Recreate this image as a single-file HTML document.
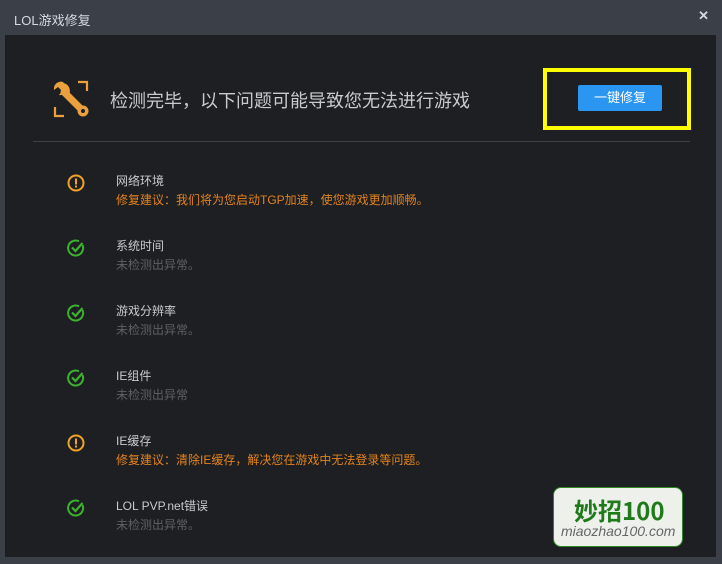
<!DOCTYPE html><html><head><meta charset="utf-8"><style>
body{margin:0;width:722px;height:564px;background:#3a3f48;font-family:"Liberation Sans","Noto Sans CJK SC",sans-serif;position:relative;overflow:hidden}
.title{position:absolute;left:14px;top:10px;color:#d6d9de;font-size:13px}
.x{position:absolute;right:13px;top:8px;color:#d6d9de;font-size:13px;font-weight:bold}
.main{position:absolute;left:5px;top:35px;width:711px;height:522px;background:#1e1f22}
.h{position:absolute;left:110px;top:87px;color:#c8cacd;font-size:18px}
.hl{position:absolute;left:33px;top:141px;width:657px;height:1px;background:#3d4048}
.yb{position:absolute;left:543px;top:68px;width:140px;height:54px;border:4px solid #ffff00}
.btn{position:absolute;left:578px;top:85px;width:84px;height:26px;background:#2a96f2;color:#fff;font-size:13px;text-align:center;line-height:26px;border-radius:2px}
.row{position:absolute;left:0}
.t{position:absolute;left:116px;color:#c8cacd;font-size:12px;white-space:nowrap}
.s{position:absolute;left:116px;top:19px;color:#5e6066;font-size:12px;white-space:nowrap}
.s.o{color:#e3831e}
.ic{position:absolute;left:66px;top:1px}
.wm{position:absolute;left:553px;top:487px;width:128px;height:58px;border:1px solid #2d8a22;border-radius:8px;background:#eef0ec}
</style></head><body>
<div class="title">LOL游戏修复</div><div class="x">✕</div>
<div class="main"></div>
<svg style="position:absolute;left:50px;top:78px" width="42" height="42" viewBox="0 0 42 42"><path d="M28 4h9v9M5 29v9h9" fill="none" stroke="#e9a03d" stroke-width="2.2"/><path d="M13 4a7 7 0 0 0-9 8l4-3 4 4-3 4a7 7 0 0 0 8-8" fill="#e9a03d"/><path d="M13 7a6 6 0 0 1 4 9" fill="none" stroke="#e9a03d" stroke-width="4"/><path d="M14 14L32 32" stroke="#e9a03d" stroke-width="7" stroke-linecap="round"/><circle cx="33" cy="33" r="5.5" fill="#e9a03d"/><circle cx="33" cy="33" r="2" fill="#1e1f22"/></svg>
<div class="h">检测完毕，以下问题可能导致您无法进行游戏</div>
<div class="yb"></div><div class="btn">一键修复</div>
<div class="hl"></div>
<div class="row" style="top:172px"><svg class="ic" width="20" height="20"><circle cx="10" cy="10" r="7.5" fill="none" stroke="#f0a326" stroke-width="2"/><rect x="9" y="5.5" width="2" height="6" fill="#f0a326"/><rect x="9" y="12.5" width="2" height="2" fill="#f0a326"/></svg><div class="t">网络环境</div><div class="s o">修复建议：我们将为您启动TGP加速，使您游戏更加顺畅。</div></div>
<div class="row" style="top:237px"><svg class="ic" width="20" height="20"><path d="M16.5 7A7.5 7.5 0 1 1 13 3.3" fill="none" stroke="#3cb22e" stroke-width="2"/><path d="M6 9.5l3.5 3.5 7-8" fill="none" stroke="#3cb22e" stroke-width="2.2"/></svg><div class="t">系统时间</div><div class="s">未检测出异常。</div></div>
<div class="row" style="top:302px"><svg class="ic" width="20" height="20"><path d="M16.5 7A7.5 7.5 0 1 1 13 3.3" fill="none" stroke="#3cb22e" stroke-width="2"/><path d="M6 9.5l3.5 3.5 7-8" fill="none" stroke="#3cb22e" stroke-width="2.2"/></svg><div class="t">游戏分辨率</div><div class="s">未检测出异常。</div></div>
<div class="row" style="top:367px"><svg class="ic" width="20" height="20"><path d="M16.5 7A7.5 7.5 0 1 1 13 3.3" fill="none" stroke="#3cb22e" stroke-width="2"/><path d="M6 9.5l3.5 3.5 7-8" fill="none" stroke="#3cb22e" stroke-width="2.2"/></svg><div class="t">IE组件</div><div class="s">未检测出异常</div></div>
<div class="row" style="top:432px"><svg class="ic" width="20" height="20"><circle cx="10" cy="10" r="7.5" fill="none" stroke="#f0a326" stroke-width="2"/><rect x="9" y="5.5" width="2" height="6" fill="#f0a326"/><rect x="9" y="12.5" width="2" height="2" fill="#f0a326"/></svg><div class="t">IE缓存</div><div class="s o">修复建议：清除IE缓存，解决您在游戏中无法登录等问题。</div></div>
<div class="row" style="top:497px"><svg class="ic" width="20" height="20"><path d="M16.5 7A7.5 7.5 0 1 1 13 3.3" fill="none" stroke="#3cb22e" stroke-width="2"/><path d="M6 9.5l3.5 3.5 7-8" fill="none" stroke="#3cb22e" stroke-width="2.2"/></svg><div class="t">LOL PVP.net错误</div><div class="s">未检测出异常。</div></div>
<div class="wm"><div style="position:absolute;left:20px;top:4px;color:#1f7a1a;font-size:24px;font-family:'Noto Sans CJK SC',sans-serif;font-weight:bold">妙招100</div><div style="position:absolute;left:7px;top:35px;color:#666;font-size:14px;font-style:italic">miaozhao100.com</div></div>
</body></html>
